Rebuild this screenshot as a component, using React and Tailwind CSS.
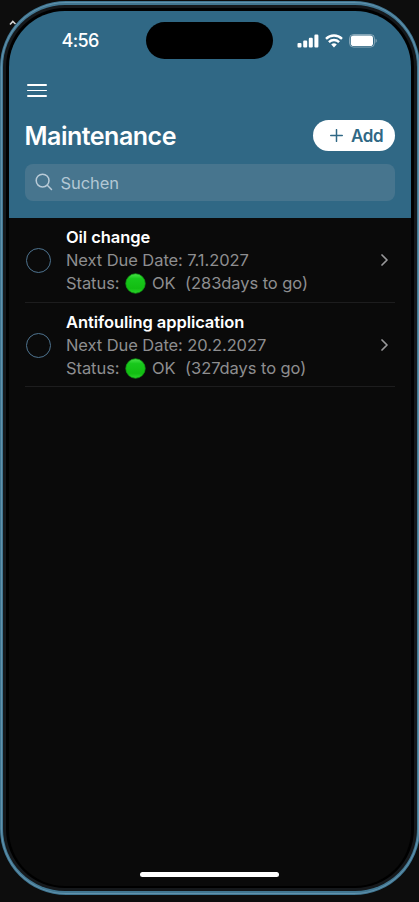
import { useState } from 'react';

const initialTasks = [
  { id: 1, title: 'Oil change', due: '7.1.2027', daysLeft: 283 },
  { id: 2, title: 'Antifouling application', due: '20.2.2027', daysLeft: 327 }
];

function SignalIcon() {
  return (
    <svg className="h-[14px] w-[22px]" viewBox="0 0 22 14" fill="currentColor">
      <rect x="0.5" y="9" width="4" height="4.5" rx="1.1" />
      <rect x="6.2" y="6.6" width="4" height="6.9" rx="1.1" />
      <rect x="11.8" y="3.8" width="4" height="9.7" rx="1.1" />
      <rect x="17.4" y="0.6" width="4" height="12.9" rx="1.1" />
    </svg>
  );
}

function WifiIcon() {
  return (
    <svg className="h-[14px] w-[18px]" viewBox="0 0 18 14" fill="none" stroke="currentColor">
      <path strokeWidth="2.4" d="M1 4.8a11.5 11.5 0 0 1 16 0" />
      <path strokeWidth="2.4" d="M3.9 8.1a7.3 7.3 0 0 1 10.2 0" />
      <path fill="currentColor" stroke="none" d="M9 13.4 6.2 10.6a4 4 0 0 1 5.6 0z" />
    </svg>
  );
}

function BatteryIcon() {
  return (
    <svg className="h-[14px] w-[28px]" viewBox="0 0 28 14" fill="none">
      <rect x="0.5" y="0.5" width="25" height="12.6" rx="4" stroke="white" strokeOpacity="0.4" />
      <rect x="1.8" y="1.6" width="22.2" height="10.4" rx="2.8" fill="white" />
      <path d="M26.6 4.8c1.5.5 1.5 3.6 0 4.1z" fill="white" fillOpacity="0.45" />
    </svg>
  );
}

function StatusDot() {
  return (
    <svg className="h-[21px] w-[21px] shrink-0" viewBox="0 0 21 21">
      <defs>
        <linearGradient id="dot" x1="0" y1="0" x2="0" y2="1">
          <stop offset="0" stopColor="#4be34b" />
          <stop offset="0.25" stopColor="#18c81c" />
          <stop offset="0.75" stopColor="#12bd12" />
          <stop offset="1" stopColor="#2bd62b" />
        </linearGradient>
      </defs>
      <circle cx="10.5" cy="10.5" r="9.7" fill="url(#dot)" stroke="#12a114" strokeWidth="0.8" />
    </svg>
  );
}

function TaskRow({ task, done, onToggle }) {
  return (
    <li className="flex h-[84px] items-center border-b border-[#1d1d1e] pl-[1.5px] pr-[5px] pt-[2px] first:h-[85px] first:pt-px">
      <button
        onClick={onToggle}
        aria-label={task.title}
        className={`mb-px h-[25px] w-[25px] shrink-0 rounded-full border-[1.3px] border-[#4e738f] ${done ? 'bg-[#306885]' : ''}`}
      />
      <div className="ml-[15px] flex-1 whitespace-nowrap text-[16.5px] leading-[22.7px] tracking-[-0.07px] text-[#8e8e90]">
        <p className="font-semibold text-white">{task.title}</p>
        <p>Next Due Date: {task.due}</p>
        <p className="flex items-center">
          <span className="w-[58.5px]">Status:</span>
          <StatusDot />
          <span className="ml-[6.5px]">OK</span>
          <span className="ml-[9.5px]">({task.daysLeft}days to go)</span>
        </p>
      </div>
      <svg className="mb-[2px] h-3 w-3 text-[#98989a]" viewBox="0 0 12 12" fill="none" stroke="currentColor">
        <path strokeLinecap="round" strokeLinejoin="round" strokeWidth="1.7" d="m4 1 5 5-5 5" />
      </svg>
    </li>
  );
}

export default function App() {
  const [tasks] = useState(initialTasks);
  const [doneIds, setDoneIds] = useState([]);
  const [query, setQuery] = useState('');

  const toggle = (id) => {
    setDoneIds(doneIds.includes(id) ? doneIds.filter(d => d !== id) : [...doneIds, id]);
  };

  const visible = tasks.filter(t => t.title.toLowerCase().includes(query.toLowerCase()));

  return (
    <div className="relative h-[902px] w-[419px] overflow-hidden bg-[#0d0d0d] pt-px font-[Inter,sans-serif]">
      {/* Fragment of the window behind the phone */}
      <svg className="absolute left-[9px] top-[20px] h-[6px] w-[8px]" viewBox="0 0 8 6" fill="none" stroke="#d5d5d5">
        <path strokeWidth="1.6" d="M1 4.5 3.8 1.5 6.5 4" />
      </svg>

      {/* Phone frame */}
      <div className="relative h-[894px] w-[419.5px] rounded-[66px] bg-[#417793] p-px">
        <div className="h-full rounded-[65px] bg-[#6292ac] p-px">
          <div className="h-full rounded-[64px] bg-[#427792] px-px pb-[2px] pt-[2px]">
            <div className="h-full rounded-[62px] bg-[#15181b] p-[3px]">
              <div className="h-full rounded-[59px] bg-black px-[3px] pb-[2px] pt-[3px]">
                <div className="flex h-full flex-col overflow-hidden rounded-[56px] bg-[#0a0a0a]">
                  <header className="h-[207px] shrink-0 bg-[#306885] px-[15.5px] text-white">
                    {/* Status bar */}
                    <div className="flex h-[61px] items-start pl-[37px] pt-[11px]">
                      <span className="mt-[7px] w-[84px] text-[18px] font-medium leading-[24px] tracking-[-0.6px]">4:56</span>
                      <div className="h-[37px] w-[127px] shrink-0 rounded-full bg-black" />
                      <div className="ml-[24px] mt-[11.5px] flex items-center gap-[6px]">
                        <SignalIcon />
                        <WifiIcon />
                        <BatteryIcon />
                      </div>
                    </div>
                    <button aria-label="Menu" className="ml-[2px] mt-[12px] flex w-[20px] flex-col gap-[4px]">
                      <span className="h-[1.5px] w-full rounded-full bg-white" />
                      <span className="h-[1.5px] w-full rounded-full bg-white" />
                      <span className="h-[1.5px] w-full rounded-full bg-white" />
                    </button>
                    <div className="mt-[23px] flex items-center justify-between">
                      <h1 className="pt-px text-[25px] font-semibold leading-[31px] tracking-[-0.5px]">Maintenance</h1>
                      <button className="flex h-[31px] w-[82px] items-center rounded-full bg-white pl-[17px] text-[17px] font-semibold leading-[31px] tracking-[-0.3px] text-[#306885]">
                        <svg className="mr-[8px] h-[13px] w-[13px]" viewBox="0 0 13 13" stroke="currentColor">
                          <path strokeLinecap="round" strokeWidth="1.5" d="M6.5.7v11.6M.7 6.5h11.6" />
                        </svg>
                        <span className="pt-px">Add</span>
                      </button>
                    </div>
                    <label className="mt-[12px] flex h-[37px] items-center rounded-[8px] bg-[#47758e] pl-[10px]">
                      <svg className="h-[18px] w-[18px] text-[#b9cbd7]" viewBox="0 0 18 18" fill="none" stroke="currentColor">
                        <circle cx="7.6" cy="7.6" r="6.4" strokeWidth="1.5" />
                        <path strokeLinecap="round" strokeWidth="1.5" d="m12.3 12.3 4.2 4.2" />
                      </svg>
                      <input
                        value={query}
                        onChange={(e) => setQuery(e.target.value)}
                        placeholder="Suchen"
                        className="ml-[8px] w-[200px] bg-transparent pt-[2px] text-[16.5px] tracking-[-0.1px] outline-none placeholder:text-[#b3c8d5]"
                      />
                    </label>
                  </header>

                  <ul className="flex-1 px-[15.5px]">
                    {visible.map(task => (
                      <TaskRow
                        key={task.id}
                        task={task}
                        done={doneIds.includes(task.id)}
                        onToggle={() => toggle(task.id)}
                      />
                    ))}
                  </ul>

                  {/* Home indicator */}
                  <div className="mx-auto mb-[9px] h-[5px] w-[139px] rounded-full bg-white" />
                </div>
              </div>
            </div>
          </div>
        </div>
      </div>
    </div>
  );
}
